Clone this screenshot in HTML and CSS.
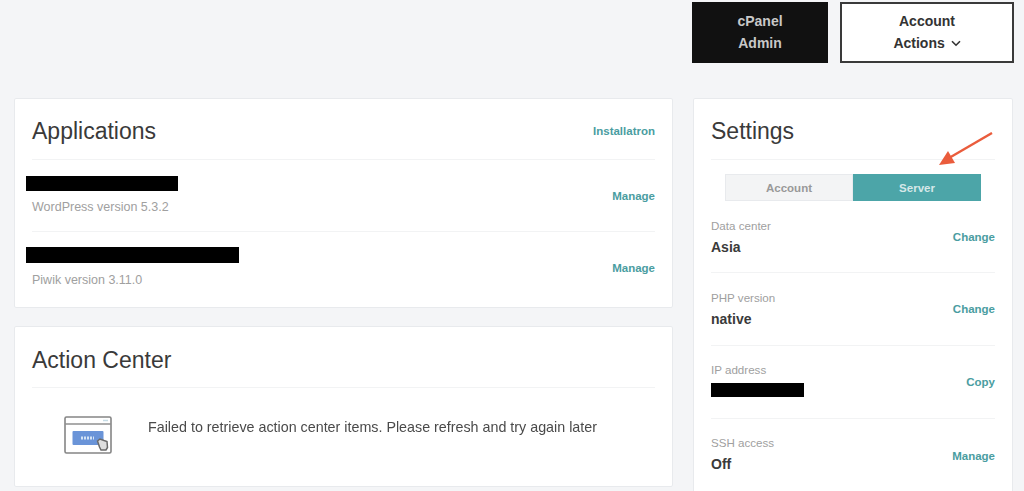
FILE: index.html
```html
<!DOCTYPE html>
<html lang="en">
<head>
<meta charset="utf-8">
<title>Dashboard</title>
<link rel="stylesheet" href="styles.css">
</head>
<body>
<div class="page">
  <header class="topbar">
    <a class="btn btn-dark">cPanel<br>Admin</a>
    <a class="btn btn-light">Account<br>Actions
      <svg class="chev" width="10" height="7" viewBox="0 0 10 7"><path d="M1 1.2l4 4 4-4" fill="none" stroke="#333" stroke-width="1.6"/></svg>
    </a>
  </header>
  <main class="layout">
    <div class="col">
      <section class="card apps">
        <div class="card-head">
          <h2>Applications</h2>
          <a class="link">Installatron</a>
        </div>
        <div class="row app-row">
          <div>
            <div class="redact redact-a"></div>
            <div class="muted app-sub">WordPress version 5.3.2</div>
          </div>
          <a class="link">Manage</a>
        </div>
        <div class="row app-row">
          <div class="lift-2">
            <div class="redact redact-b"></div>
            <div class="muted app-sub">Piwik version 3.11.0</div>
          </div>
          <a class="link">Manage</a>
        </div>
      </section>
      <section class="card action">
        <div class="card-head head-low">
          <h2>Action Center</h2>
        </div>
        <div class="action-body">
          <svg class="action-icon" width="48" height="38" viewBox="0 0 48 38">
            <rect x="1" y="1" width="46" height="36" rx="1.5" fill="#fff" stroke="#858585" stroke-width="1.6"/>
            <path d="M1 8h46" stroke="#8f8f8f" stroke-width="1.3"/>
            <path d="M39 4.500h5" stroke="#c6dce6" stroke-width="1.5"/>
            <rect x="8.500" y="15" width="31" height="14" rx="1" fill="#6a94d8"/>
            <path d="M17 22h13" stroke="#d5e4f5" stroke-width="3" stroke-dasharray="2 1"/>
            <path d="M33.500 25l2.500-2 4 1.500 3 1 .5 6-1.500 2.500h-5l-1.500-3z" fill="#dedede" stroke="#6a6a6a" stroke-width="1.500"/>
          </svg>
          <p>Failed to retrieve action center items. Please refresh and try again later</p>
        </div>
      </section>
    </div>
    <section class="card settings">
      <div class="card-head">
        <h2>Settings</h2>
      </div>
      <svg class="arrow" width="56" height="36" viewBox="0 0 56 36">
        <path d="M54 1L11 26" stroke="#ea5c3c" stroke-width="2.400" fill="none"/>
        <path d="M1 33l9-14 7 12z" fill="#ea5c3c"/>
      </svg>
      <div class="tabs">
        <div class="tab">Account</div>
        <div class="tab tab-on">Server</div>
      </div>
      <div class="row set-row first">
        <div><div class="muted">Data center</div><div class="val">Asia</div></div>
        <a class="link">Change</a>
      </div>
      <div class="row set-row">
        <div><div class="muted">PHP version</div><div class="val">native</div></div>
        <a class="link">Change</a>
      </div>
      <div class="row set-row">
        <div class="lift-6"><div class="muted">IP address</div><div class="redact redact-c"></div></div>
        <a class="link">Copy</a>
      </div>
      <div class="row set-row">
        <div class="lift-4"><div class="muted">SSH access</div><div class="val">Off</div></div>
        <a class="link">Manage</a>
      </div>
    </section>
  </main>
</div>
</body>
</html>
```
FILE: styles.css
```css
* { box-sizing: border-box; }
html, body { margin: 0; height: 491px; overflow: hidden; background: #f4f5f7; }
body { font-family: "Liberation Sans", Arial, sans-serif; color: #333; }
.page { filter: blur(0.6px); height: 491px; overflow: hidden; }
.topbar { display: flex; justify-content: flex-end; gap: 12px; padding: 2px 10px 0 0; height: 98px; }
.btn { display: block; text-align: center; height: 61px; font-size: 14px; line-height: 22px; font-weight: 700; padding-top: 8px; }
.btn-dark { width: 136px; background: #111; color: #c8c8c8; }
.btn-light { width: 174px; background: #fff; border: 2px solid #3a3a3a; padding-top: 6px; color: #333; }
.chev { margin-left: 2px; vertical-align: 1px; }
.layout { display: grid; grid-template-columns: 659px 320px; gap: 20px; padding-left: 14px; }
.col { display: flex; flex-direction: column; gap: 18px; }
.card { background: #fff; border: 1px solid #e8eaed; border-radius: 2px; padding: 0 17px; position: relative; }
.apps { height: 210px; }
.action { height: 161px; }
.settings { height: 420px; }
.card-head { height: 61px; display: flex; align-items: center; justify-content: space-between; border-bottom: 1px solid #f2f3f4; padding-top: 4px; }
.head-low { padding-top: 6px; }
h2 { margin: 0; font-size: 23px; font-weight: 400; color: #3a3a3a; }
.link { font-size: 11.5px; font-weight: 700; color: #4a9da1; }
.row { display: flex; align-items: center; justify-content: space-between; border-bottom: 1px solid #f2f3f4; }
.row:last-child { border-bottom: 0; }
.app-row { height: 72px; }
.lift-2 { padding-bottom: 2px; }
.lift-4 { padding-bottom: 4px; }
.lift-6 { padding-bottom: 6px; }
.muted { font-size: 11.6px; color: #a0a0a0; line-height: 16px; }
.app-sub { font-size: 12.5px; }
.redact { background: #000; }
.redact-a { width: 152px; height: 15px; margin: 0 0 8px -6px; }
.redact-b { width: 213px; height: 16px; margin: 0 0 9px -6px; }
.redact-c { width: 93px; height: 14px; margin-top: 5px; }
.action-body { display: flex; align-items: center; padding: 28px 0 0 32px; }
.action-icon { flex: none; }
.action-body p { margin: 0 0 0 36px; font-size: 14.3px; color: #4a4a4a; position: relative; top: -8px; }
.arrow { position: absolute; top: 33px; right: 18px; }
.tabs { display: flex; width: 256px; height: 27px; margin: 14px 0 0 14px; font-size: 11.5px; font-weight: 700; }
.tab { flex: 1; display: flex; align-items: center; justify-content: center; background: #f3f4f5; color: #999; border: 1px solid #e8eaed; }
.tab-on { background: #4ca5a8; color: #d5e8e8; border-color: #4ca5a8; }
.set-row { height: 73px; }
.set-row.first { height: 72px; }
.val { font-size: 14px; font-weight: 700; color: #3a3a3a; line-height: 18px; margin-top: 4px; }
```
